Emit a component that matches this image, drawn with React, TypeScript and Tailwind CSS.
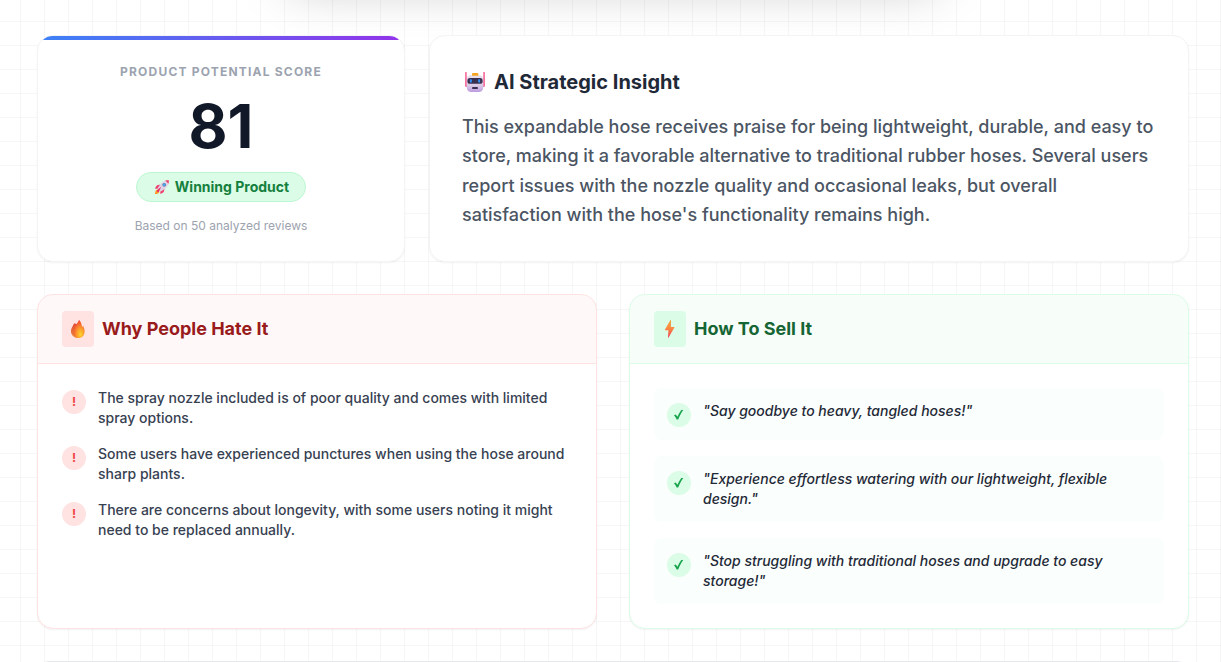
import type { ReactNode } from "react";
import { clsx } from "clsx";

const complaints = [
  "The spray nozzle included is of poor quality and comes with limited spray options.",
  "Some users have experienced punctures when using the hose around sharp plants.",
  "There are concerns about longevity, with some users noting it might need to be replaced annually.",
];

const sellingPoints = [
  '"Say goodbye to heavy, tangled hoses!"',
  '"Experience effortless watering with our lightweight, flexible design."',
  '"Stop struggling with traditional hoses and upgrade to easy storage!"',
];

function RobotIcon() {
  return (
    <svg viewBox="0 0 26 24" className="h-6 w-[26px]" aria-hidden="true">
      <defs>
        <linearGradient id="robot-face" x1="0" y1="0" x2="0" y2="1">
          <stop offset="0" stopColor="#e9e3ec" />
          <stop offset="0.6" stopColor="#d9cbe6" />
          <stop offset="1" stopColor="#bd9be0" />
        </linearGradient>
      </defs>
      <rect x="3.300" y="2" width="1.300" height="10" rx="0.6" fill="#f2447f" />
      <rect x="21.400" y="2" width="1.300" height="10" rx="0.6" fill="#f2447f" />
      <rect x="3" y="8" width="3" height="9" rx="1.300" fill="#f5719f" />
      <rect x="20" y="8" width="3" height="9" rx="1.300" fill="#f5719f" />
      <rect x="4.700" y="5" width="16.600" height="17" rx="4.500" fill="url(#robot-face)" />
      <rect x="10" y="3" width="6.400" height="2.800" rx="0.9" fill="#f6a623" />
      <rect x="5.400" y="8" width="15.200" height="5.800" rx="2.600" fill="#38304f" />
      <ellipse cx="8.900" cy="10.900" rx="1.100" ry="1.800" fill="#2f8df5" />
      <ellipse cx="17.100" cy="10.900" rx="1.100" ry="1.800" fill="#2f8df5" />
      <rect x="10.200" y="17" width="5.600" height="2" rx="0.5" fill="#38304f" />
    </svg>
  );
}

function RocketIcon() {
  return (
    <svg viewBox="0 0 16 16" className="h-4 w-4" aria-hidden="true">
      <path d="M1 15c0-2.500.6-4.300 2.200-4.500l2.300 2.200C5.200 14.500 3.500 15 1 15z" fill="#ff9a2e" />
      <path d="M6.500 5.400 3.200 6.200C1.900 7 1.300 8.500 1.200 10l3.600-.8z" fill="#f0406e" />
      <path d="M10.600 9.500 9.800 12.800C9 14.100 7.500 14.700 6 14.800l.8-3.600z" fill="#f0406e" />
      <path d="M14.800 1.200c.3 4-1.500 7.300-7.700 11L3.800 8.900C7.500 2.700 10.800.9 14.800 1.200z" fill="#dfd3e6" />
      <path d="M14.800 1.200c.1 1.300 0 2.400-.4 3.500L11.300 1.600c1.100-.4 2.200-.5 3.500-.4z" fill="#f0406e" />
      <path d="M7.200 7.800 3 11.200c-.5.900.9 2.300 1.800 1.800z" fill="#e6286a" />
      <circle cx="10.200" cy="5.800" r="1.900" fill="#6d7fa8" />
      <circle cx="10.200" cy="5.800" r="1.200" fill="#3fa9f5" />
    </svg>
  );
}

function FireIcon() {
  return (
    <svg viewBox="0 0 16 20" className="h-5 w-4" aria-hidden="true">
      <defs>
        <linearGradient id="fire-back" x1="0" y1="0" x2="0" y2="1">
          <stop offset="0" stopColor="#e04a35" />
          <stop offset="1" stopColor="#ee8a3c" />
        </linearGradient>
        <radialGradient id="fire-core" cx="0.62" cy="0.8" r="0.78">
          <stop offset="0" stopColor="#ffd22e" />
          <stop offset="0.45" stopColor="#fb982c" />
          <stop offset="1" stopColor="#f04235" />
        </radialGradient>
      </defs>
      <path
        d="M4.600 4.300C3.800 5.100 3 6 2.800 7 1.700 8.400 1 10.300 1 12.300 1 16.100 4 19 7.800 19L9 6z"
        fill="url(#fire-back)"
      />
      <path
        d="M9 .8C8.300 4.200 3.700 7.200 3.700 12.600 3.700 16.600 5.600 19 8.600 19c3.600 0 6-2.800 6-6.600 0-2-.6-4-1.600-5.600-.2.600-.5 1-.9 1.200C11.700 5 10.700 2.500 9 .8z"
        fill="url(#fire-core)"
      />
    </svg>
  );
}

function BoltIcon() {
  return (
    <svg viewBox="0 0 16 20" className="h-5 w-4" aria-hidden="true">
      <defs>
        <linearGradient id="bolt" x1="0" y1="0" x2="0" y2="1">
          <stop offset="0" stopColor="#f0a63e" />
          <stop offset="0.5" stopColor="#fb8642" />
          <stop offset="1" stopColor="#f0405a" />
        </linearGradient>
      </defs>
      <path
        d="M8.300 1.300 3 10.500c-.2.400 0 .7.400.7h3l-.4 7.200c0 .4.400.5.600.2l5.800-10c.2-.4 0-.7-.4-.7H8.900l.1-6.400c0-.5-.5-.6-.7-.2z"
        fill="url(#bolt)"
      />
    </svg>
  );
}

function CheckMark() {
  return (
    <svg viewBox="0 0 12 12" className="h-3 w-3" aria-hidden="true">
      <path
        d="M1 6.300 2.700 5.500 4.400 7.800C5.500 5.200 6.800 3 8.300 1L10.300 .9C8.300 3.600 6.500 6.800 5.200 10.500L3.700 10.600C3 9 2.100 7.600 1 6.300z"
        fill="currentColor"
      />
    </svg>
  );
}

interface PanelProps {
  title: string;
  icon: ReactNode;
  tone: "red" | "green";
  children: ReactNode;
}

function Panel({ title, icon, tone, children }: PanelProps) {
  const red = tone === "red";
  return (
    <section
      className={clsx(
        "overflow-hidden rounded-2xl border bg-white shadow-xs",
        red ? "border-red-100" : "border-green-100",
      )}
    >
      <div
        className={clsx(
          "flex items-center gap-2 border-b px-6 py-4",
          red ? "border-red-100 bg-red-50/50" : "border-green-100 bg-green-50/50",
        )}
      >
        <span
          className={clsx(
            "flex h-9 w-8 items-center justify-center rounded-sm",
            red ? "bg-red-100" : "bg-green-100",
          )}
        >
          {icon}
        </span>
        <h3 className={clsx("text-lg font-bold", red ? "text-[#991b1b]" : "text-[#166534]")}>
          {title}
        </h3>
      </div>
      <ul className="space-y-4 p-6">{children}</ul>
    </section>
  );
}

export default function App() {
  return (
    <main className="min-h-screen overflow-hidden bg-white bg-[linear-gradient(to_right,#80808012_1px,transparent_1px),linear-gradient(to_bottom,#80808012_1px,transparent_1px)] bg-[size:24px_24px] bg-[position:20px_21px] pr-8 pl-[37px] font-['Inter',sans-serif]">
      {/* bottom of the search card above the results */}
      <div className="mx-auto -mt-[91px] mb-[62px] h-16 max-w-2xl rounded-2xl shadow-2xl" />

      <div className="mx-auto max-w-6xl space-y-8">
        <div className="grid gap-6 md:grid-cols-3">
          <section className="relative flex flex-col items-center justify-center overflow-hidden rounded-2xl border border-gray-100 bg-white p-6 text-center shadow-xs">
            <div className="absolute inset-x-0 top-0 h-1 bg-linear-to-r/srgb from-[#3b82f6] to-[#9333ea]" />
            <h2 className="mb-4 text-xs font-bold tracking-widest text-[#9ca3af] uppercase">
              Product Potential Score
            </h2>
            <div className="mb-4 text-6xl leading-none font-bold text-[#111827]">81</div>
            <div className="flex items-center gap-1 rounded-full border border-[#bbf7d0] bg-green-100 px-4 py-1 text-sm font-bold text-[#15803d]">
              <span className="flex w-[18px] justify-center">
                <RocketIcon />
              </span>
              Winning Product
            </div>
            <p className="mt-4 text-xs text-[#9ca3af]">Based on 50 analyzed reviews</p>
          </section>

          <section className="rounded-2xl border border-gray-100 bg-white p-8 shadow-xs md:col-span-2">
            <h3 className="mb-4 flex items-center gap-1.5 text-xl font-bold text-[#1f2937]">
              <RobotIcon />
              AI Strategic Insight
            </h3>
            <p className="text-lg leading-relaxed font-medium text-[#4b5563]">
              This expandable hose receives praise for being lightweight, durable, and easy to
              store, making it a favorable alternative to traditional rubber hoses. Several users
              report issues with the nozzle quality and occasional leaks, but overall satisfaction
              with the hose's functionality remains high.
            </p>
          </section>
        </div>

        <div className="grid gap-8 md:grid-cols-2">
          <Panel title="Why People Hate It" icon={<FireIcon />} tone="red">
            {complaints.map((text) => (
              <li key={text} className="flex items-start gap-3">
                <span className="mt-0.5 flex h-6 w-6 shrink-0 items-center justify-center rounded-full bg-red-100 text-xs font-bold text-[#ef4444]">
                  !
                </span>
                <span className="text-sm font-medium text-[#374151]">{text}</span>
              </li>
            ))}
          </Panel>

          <Panel title="How To Sell It" icon={<BoltIcon />} tone="green">
            {sellingPoints.map((text) => (
              <li
                key={text}
                className="flex items-start gap-3 rounded-lg border border-transparent bg-green-50/30 p-3"
              >
                <span className="mt-0.5 flex h-6 w-6 shrink-0 items-center justify-center rounded-full bg-green-100 text-[#16a34a]">
                  <CheckMark />
                </span>
                <span className="text-sm font-medium text-[#1f2937] italic">{text}</span>
              </li>
            ))}
          </Panel>
        </div>

        {/* next card starts at the fold */}
        <div className="-mb-[23px] h-6 rounded-t-xl border border-gray-200 bg-white" />
      </div>
    </main>
  );
}
